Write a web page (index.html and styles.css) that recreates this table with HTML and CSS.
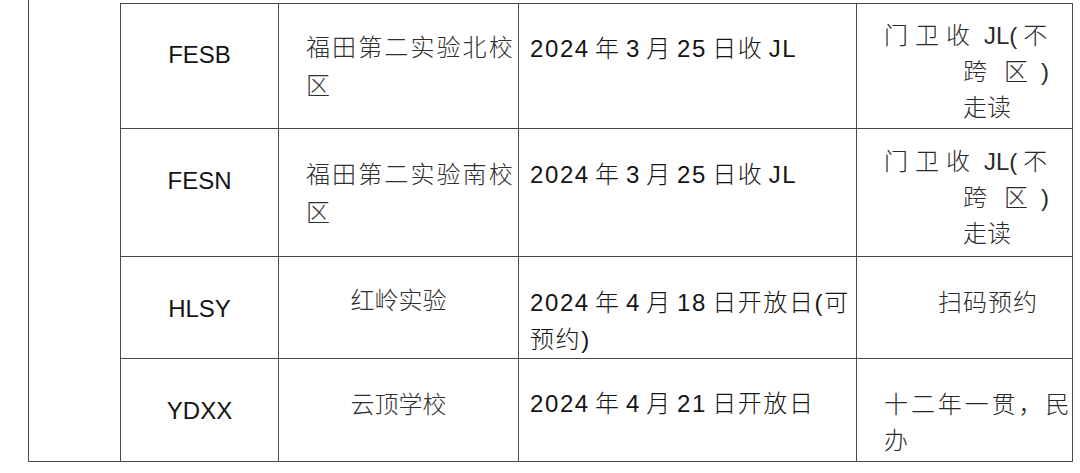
FILE: index.html
```html
<!DOCTYPE html>
<html lang="zh-CN">
<head>
<meta charset="utf-8">
<title>学校信息表</title>
<link rel="stylesheet" href="styles.css">
</head>
<body>
<div class="page">
  <div class="stub"></div>
  <div class="schools">
    <div class="cell code r1">FESB</div>
    <div class="cell name spread r1">福田第二实验北校<br>区</div>
    <div class="cell date r1">2024 年 3 月 25 日收 JL</div>
    <div class="cell note high r1">
      <span class="ln l1"><span class="wide">门卫收</span>JL(<span class="bu">不</span></span>
      <span class="ln l2"><span class="gap">跨</span><span class="gap2">区</span>)</span>
      <span class="ln l2">走读</span>
    </div>

    <div class="cell code r2">FESN</div>
    <div class="cell name spread r2">福田第二实验南校<br>区</div>
    <div class="cell date r2">2024 年 3 月 25 日收 JL</div>
    <div class="cell note high r2">
      <span class="ln l1"><span class="wide">门卫收</span>JL(<span class="bu">不</span></span>
      <span class="ln l2"><span class="gap">跨</span><span class="gap2">区</span>)</span>
      <span class="ln l2">走读</span>
    </div>

    <div class="cell code r3">HLSY</div>
    <div class="cell name center r3">红岭实验</div>
    <div class="cell date two r3">2024 年 4 月 18 日开放日(可<br>预约)</div>
    <div class="cell note scan r3">扫码预约</div>

    <div class="cell code r4">YDXX</div>
    <div class="cell name center r4">云顶学校</div>
    <div class="cell date r4">2024 年 4 月 21 日开放日</div>
    <div class="cell note left r4"><span class="spaced">十二年一贯，民</span><br>办</div>
  </div>
</div>
</body>
</html>
```

FILE: styles.css
```css
html, body {
  margin: 0;
  padding: 0;
  background: #ffffff;
}

body {
  font-family: "Liberation Sans", "Noto Sans CJK SC", sans-serif;
  font-size: 24px;
  font-weight: 300;
  color: #141414;
}

.page {
  display: flex;
  align-items: flex-start;
  margin-left: 28px;
}

.stub {
  width: 92px;
  height: 462px;
  box-sizing: border-box;
  border-left: 1px solid #4a4a4a;
  border-bottom: 1px solid #4a4a4a;
  flex: none;
}

.schools {
  margin-top: 3px;
  display: grid;
  grid-template-columns: 158px 240px 338px 216px;
  grid-template-rows: 125px 128px 102px 103px;
  border-top: 1px solid #4a4a4a;
  border-left: 1px solid #4a4a4a;
  flex: none;
}

.cell {
  box-sizing: border-box;
  border-right: 1px solid #4a4a4a;
  border-bottom: 1px solid #4a4a4a;
  line-height: 38px;
  white-space: nowrap;
  overflow: hidden;
}

.code {
  text-align: center;
  padding-top: 33px;
}

.code.r1 {
  padding-top: 32px;
}

.name {
  padding-top: 25px;
  color: #303030;
}

.name.r2 {
  padding-top: 27px;
}

.name.r4 {
  padding-top: 27px;
}

.spread {
  padding-left: 27px;
  letter-spacing: 2.1px;
}

.center {
  text-align: center;
}

.date {
  padding-top: 26px;
  padding-left: 11px;
  letter-spacing: 1.6px;
  word-spacing: -3px;
}

.date.r2 {
  padding-top: 27px;
}

.date.two {
  line-height: 37px;
  padding-top: 27px;
}

.note {
  color: #2a2a2a;
  padding-top: 27px;
}

.note.high {
  line-height: 36px;
  padding-top: 14px;
}

.note.high.r2 {
  padding-top: 15px;
}

.note.scan {
  padding-left: 81px;
  letter-spacing: 1px;
}

.note.left {
  line-height: 36px;
  padding-top: 28px;
  padding-left: 27px;
}

.ln {
  display: block;
}

.l1 {
  padding-left: 27px;
}

.l2 {
  padding-left: 106px;
}

.wide {
  letter-spacing: 7px;
  margin-right: 7px;
}

.bu {
  margin-left: 6px;
}

.gap {
  margin-right: 17px;
}

.gap2 {
  margin-right: 13px;
}

.spaced {
  letter-spacing: 2.9px;
}
```
